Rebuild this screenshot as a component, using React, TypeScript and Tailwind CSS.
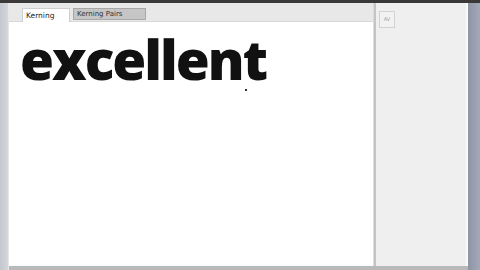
import React from "react";

export default function App() {
  return (
    <div className="w-[480px] h-[270px] overflow-hidden flex flex-col bg-[#3b3937]" style={{ fontFamily: '"DejaVu Sans", sans-serif' }}>
      <div className="h-[3px] shrink-0 bg-[#3b3937]" />
      <div className="flex flex-1 min-h-0">
        <div className="w-[8px] shrink-0 bg-gradient-to-r from-[#c3c8cf] to-[#d3d6db]" />
        <div className="flex-1 flex flex-col bg-[#f4f4f4] border-l border-[#e6e6e6]">
          <div className="flex flex-1 min-h-0">
            {/* main area */}
            <div className="w-[364px] flex flex-col">
              <div className="h-[19px] bg-[#e8e8e8] flex items-end pl-[13px] gap-[3px] border-b border-[#d8d8d8]">
                <div className="h-[14px] w-[48px] bg-white border border-[#cfcfcf] border-b-0 text-[7.5px] leading-none text-[#222] flex items-center pl-[3px] -mb-px">Kerning</div>
                <div className="h-[12px] w-[73px] bg-[#c6c6c6] border border-[#a8a8a8] text-[7px] leading-none text-[#333] flex items-center pl-[3px] mb-px">Kerning Pairs</div>
              </div>
              <div className="flex-1 bg-white relative overflow-hidden">
                <div
                  className="absolute left-[11px] top-[7px] text-[55px] leading-[60px] text-[#111] tracking-[-2px]"
                  style={{ fontFamily: '"Open Sans", sans-serif', fontWeight: 800 }}
                >
                  excellent
                </div>
                <div className="absolute left-[236px] top-[67px] w-[2px] h-[2px] bg-[#333]" />
              </div>
            </div>
            <div className="w-[3px] bg-[#c4c4c4] border-l border-[#dcdcdc]" />
            {/* right panel */}
            <div className="flex-1 bg-[#efefef] pt-[8px] pl-[3px]">
              <div className="w-[16px] h-[17px] border border-[#d2d2d2] bg-[#f2f2f2] flex items-center justify-center text-[5px] text-[#999]">AV</div>
            </div>
            <div className="w-[2px] bg-[#fafafa]" />
          </div>
          <div className="h-[4px] bg-[#b9b9b9]" />
        </div>
        <div className="w-[12px] shrink-0 bg-gradient-to-r from-[#8f95a6] to-[#a4a9b8]" />
      </div>
    </div>
  );
}
